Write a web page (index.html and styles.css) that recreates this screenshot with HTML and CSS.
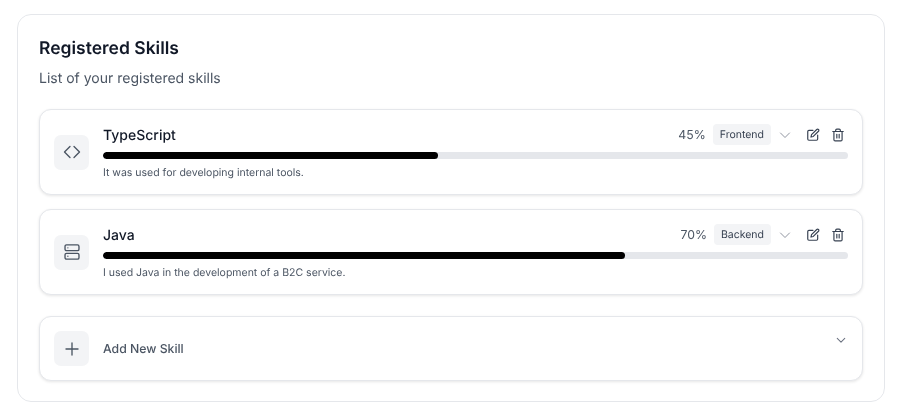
FILE: index.html
```html
<!DOCTYPE html>
<html lang="en">
<head>
    <meta charset="UTF-8">
    <meta name="viewport" content="width=device-width, initial-scale=1.0">
    <title>Registered Skills</title>
    <link rel="stylesheet" href="styles.css">
</head>
<body>
    <section class="panel">
        <h2 class="panel-title">Registered Skills</h2>
        <p class="panel-sub">List of your registered skills</p>

        <div class="skill-list">
            <div class="card skill">
                <div class="icon-box">
                    <svg width="18" height="18" viewBox="0 0 24 24" class="ico"><path d="M9.300 4.700L2 12l7.300 7.300"/><path d="M14.700 4.700L22 12l-7.300 7.300"/></svg>
                </div>
                <div class="skill-main">
                    <div class="skill-head">
                        <span class="skill-name">TypeScript</span>
                        <span class="percent">45%</span>
                        <span class="badge">Frontend</span>
                        <svg width="12" height="12" viewBox="0 0 24 24" class="chev"><path d="M3 8l9 9 9-9"/></svg>
                        <svg width="14" height="14" viewBox="0 0 24 24" class="ico act edit"><path d="M12 4H5a2 2 0 0 0-2 2v13a2 2 0 0 0 2 2h13a2 2 0 0 0 2-2v-7"/><path d="M18.400 2.600a2 2 0 0 1 3 3L12.500 14.500l-4 1 1-4z"/></svg>
                        <svg width="14" height="14" viewBox="0 0 24 24" class="ico act trash"><path d="M3 6h18"/><path d="M19 6v14a2 2 0 0 1-2 2H7a2 2 0 0 1-2-2V6"/><path d="M8 6V4a2 2 0 0 1 2-2h4a2 2 0 0 1 2 2v2"/><path d="M10 11v6"/><path d="M14 11v6"/></svg>
                    </div>
                    <div class="bar"><div class="bar-fill" style="width: 45%"></div></div>
                    <p class="skill-note">It was used for developing internal tools.</p>
                </div>
            </div>

            <div class="card skill">
                <div class="icon-box">
                    <svg width="18" height="18" viewBox="0 0 24 24" class="ico"><rect x="2.700" y="2.500" width="18.600" height="7.700" rx="2"/><rect x="2.700" y="13.800" width="18.600" height="7.700" rx="2"/><path d="M6.500 6.400h.01"/><path d="M6.500 17.600h.01"/></svg>
                </div>
                <div class="skill-main">
                    <div class="skill-head">
                        <span class="skill-name">Java</span>
                        <span class="percent">70%</span>
                        <span class="badge">Backend</span>
                        <svg width="12" height="12" viewBox="0 0 24 24" class="chev"><path d="M3 8l9 9 9-9"/></svg>
                        <svg width="14" height="14" viewBox="0 0 24 24" class="ico act edit"><path d="M12 4H5a2 2 0 0 0-2 2v13a2 2 0 0 0 2 2h13a2 2 0 0 0 2-2v-7"/><path d="M18.400 2.600a2 2 0 0 1 3 3L12.500 14.500l-4 1 1-4z"/></svg>
                        <svg width="14" height="14" viewBox="0 0 24 24" class="ico act trash"><path d="M3 6h18"/><path d="M19 6v14a2 2 0 0 1-2 2H7a2 2 0 0 1-2-2V6"/><path d="M8 6V4a2 2 0 0 1 2-2h4a2 2 0 0 1 2 2v2"/><path d="M10 11v6"/><path d="M14 11v6"/></svg>
                    </div>
                    <div class="bar"><div class="bar-fill" style="width: 70%"></div></div>
                    <p class="skill-note">I used Java in the development of a B2C service.</p>
                </div>
            </div>
        </div>

        <div class="card add">
            <div class="icon-box">
                <svg width="18" height="18" viewBox="0 0 24 24" class="ico"><path d="M12 4v16"/><path d="M4 12h16"/></svg>
            </div>
            <span class="add-label">Add New Skill</span>
            <svg width="10" height="10" viewBox="0 0 24 24" class="chev add-chev"><path d="M3 8l9 9 9-9"/></svg>
        </div>
    </section>
</body>
</html>
```

FILE: styles.css
```css
body {
    margin: 0;
    padding: 14px 19px 0 17px;
    font-family: Inter, "Liberation Sans", sans-serif;
    background-color: #ffffff;
    color: #111827;
    text-rendering: geometricPrecision;
}
svg {
    display: block;
    flex: none;
}
.panel {
    height: 388px;
    box-sizing: border-box;
    padding: 22px 21px 21px;
    background: white;
    border: 1px solid #e5e7eb;
    border-radius: 14px;
    will-change: transform;
}
.panel-title {
    margin: 0;
    font-size: 17.500px;
    line-height: 24px;
    font-weight: 600;
}
.panel-sub {
    margin: 6px 0 0;
    font-size: 14px;
    line-height: 24px;
    color: #4b5563;
}
.skill-list {
    display: flex;
    flex-direction: column;
    gap: 14px;
    margin-top: 18px;
}
.card {
    display: flex;
    align-items: center;
    gap: 14px;
    box-sizing: border-box;
    padding: 14px;
    background: white;
    border: 1px solid #e5e7eb;
    border-radius: 12px;
    box-shadow: 0 1px 3px rgba(0, 0, 0, 0.1);
}
.skill {
    height: 86px;
}
.icon-box {
    display: flex;
    align-items: center;
    justify-content: center;
    flex: none;
    width: 35px;
    height: 35px;
    background: #f3f4f6;
    border-radius: 7px;
}
.ico {
    fill: none;
    stroke: #4b5563;
    stroke-width: 1.800;
    stroke-linecap: round;
    stroke-linejoin: round;
}
.act {
    stroke: #374151;
    stroke-width: 2;
}
.chev {
    fill: none;
    stroke: #6b7280;
    stroke-width: 1.500;
    stroke-linecap: round;
    stroke-linejoin: round;
}
.skill-main {
    flex: 1;
    min-width: 0;
}
.skill-head {
    display: flex;
    align-items: center;
    height: 21px;
}
.skill-name {
    flex: 1;
    padding-top: 1px;
    font-size: 14px;
    font-weight: 500;
}
.percent {
    font-size: 12.250px;
    color: #4b5563;
    margin-right: 7px;
}
.badge {
    padding: 0 7px;
    height: 21px;
    line-height: 21px;
    font-size: 10.500px;
    color: #374151;
    background: #f3f4f6;
    border-radius: 4px;
}
.skill-head .chev {
    margin-left: 8px;
}
.act.edit {
    margin-left: 15px;
    margin-right: 11px;
}
.act.trash {
    margin-right: 3px;
}
.bar {
    height: 7px;
    margin-top: 7px;
    background: #e5e7eb;
    border-radius: 4px;
    overflow: hidden;
}
.bar-fill {
    height: 100%;
    background: #000000;
    border-radius: 4px;
}
.skill-note {
    margin: 6px 0 0;
    font-size: 10.500px;
    line-height: 15px;
    color: #4b5563;
}
.add {
    height: 65px;
    margin-top: 21px;
    align-items: flex-start;
}
.add-label {
    flex: 1;
    align-self: center;
    font-size: 12.250px;
    font-weight: 500;
    color: #4b5563;
}
.add-chev {
    margin: 4px 2px 0 0;
    stroke-width: 2.500;
}
```
